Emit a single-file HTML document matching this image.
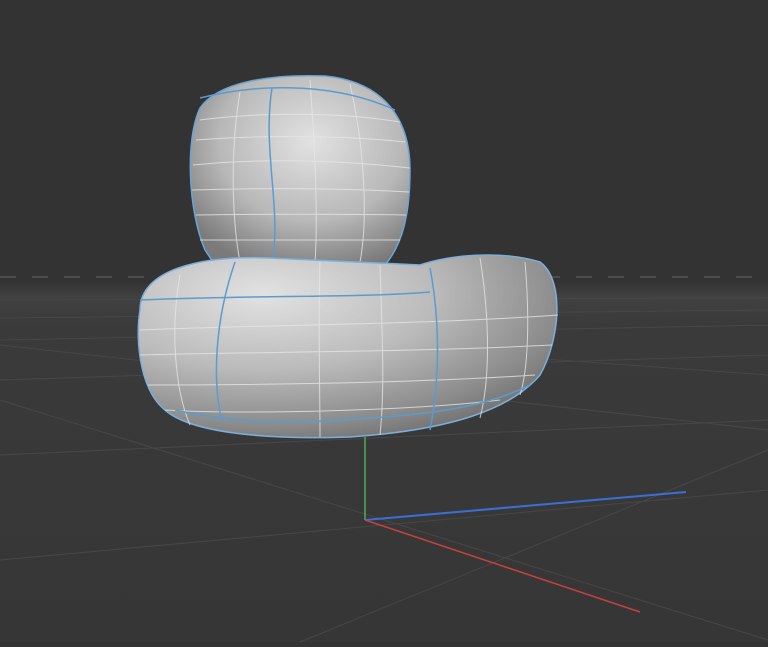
<!DOCTYPE html>
<html><head><style>html,body{margin:0;padding:0;background:#333;overflow:hidden}</style></head>
<body>
<svg width="768" height="642" viewBox="0 0 768 642" xmlns="http://www.w3.org/2000/svg">
<defs>
<linearGradient id="fl" x1="0" y1="0" x2="0" y2="1">
<stop offset="0" stop-color="#333"/><stop offset="0.04" stop-color="#414141"/><stop offset="0.12" stop-color="#3a3a3a"/><stop offset="1" stop-color="#363636"/>
</linearGradient>
<radialGradient id="hd" cx="0.55" cy="0.35" r="0.7">
<stop offset="0" stop-color="#e2e2e2"/><stop offset="0.6" stop-color="#b8b8b8"/><stop offset="1" stop-color="#7a7a7a"/>
</radialGradient>
<radialGradient id="bd" cx="0.3" cy="0.22" r="0.9">
<stop offset="0" stop-color="#e2e2e2"/><stop offset="0.45" stop-color="#bbb"/><stop offset="0.8" stop-color="#8a8a8a"/><stop offset="1" stop-color="#666"/>
</radialGradient>
</defs>
<rect width="768" height="642" fill="#333"/>
<rect y="282" width="768" height="360" fill="url(#fl)"/>
<line x1="0" y1="277" x2="768" y2="277" stroke="#555" stroke-width="1.5" stroke-dasharray="16,16"/>
<g stroke="#474747" stroke-width="1" fill="none">
<line x1="0" y1="300" x2="768" y2="298"/>
<line x1="0" y1="318" x2="768" y2="310"/>
<line x1="0" y1="340" x2="768" y2="325"/>
<line x1="0" y1="380" x2="768" y2="355"/>
<line x1="0" y1="455" x2="768" y2="420"/>
<line x1="0" y1="560" x2="768" y2="490"/>
<line x1="0" y1="400" x2="768" y2="640"/>
<line x1="0" y1="345" x2="768" y2="430"/>
<line x1="420" y1="350" x2="768" y2="375"/>
<line x1="300" y1="642" x2="768" y2="450"/>
</g>
<line x1="365" y1="437" x2="365" y2="520" stroke="#4caf50" stroke-width="1.5"/>
<line x1="365" y1="520" x2="686" y2="492" stroke="#3a6fd8" stroke-width="2"/>
<line x1="365" y1="520" x2="640" y2="612" stroke="#c84040" stroke-width="1.5"/>
<path d="M205 250 C188 210 185 140 200 108 C218 82 270 74 325 76 C385 82 410 120 410 170 C410 215 402 245 385 265 L215 265 Z" fill="url(#hd)" stroke="#6aa6d6" stroke-width="1.5"/>
<g stroke="#e6e6e6" stroke-width="1" fill="none" opacity="0.8">
<path d="M193 165 C260 158 340 160 410 168"/><path d="M192 190 C260 188 340 188 409 192"/><path d="M196 215 C260 214 340 214 406 215"/><path d="M200 240 C260 240 340 240 400 240"/>
<path d="M200 120 C260 112 340 112 400 122"/><path d="M196 140 C260 135 340 135 405 142"/>
<path d="M240 92 C230 150 232 220 240 262"/><path d="M310 80 C315 150 318 220 315 262"/><path d="M350 84 C365 150 368 220 360 262"/>
</g>
<path d="M272 88 C262 150 282 210 272 262" stroke="#5a9bd0" stroke-width="1.5" fill="none"/>
<path d="M200 98 C250 85 330 80 395 110" stroke="#5a9bd0" stroke-width="1.5" fill="none"/>
<path d="M140 310 C140 270 200 255 270 258 L420 265 C450 255 500 250 540 262 C565 280 560 340 540 375 C510 410 450 430 350 437 C260 440 190 432 165 410 C140 390 135 340 140 310 Z" fill="url(#bd)" stroke="#7ab0dc" stroke-width="1.5"/>
<g stroke="#e6e6e6" stroke-width="1" fill="none" opacity="0.8">
<path d="M140 330 C250 325 420 325 558 315"/><path d="M140 355 C250 352 420 352 552 345"/><path d="M148 385 C250 385 420 383 535 375"/><path d="M165 410 C250 415 420 410 500 400"/>
<path d="M180 275 C170 330 175 390 190 425"/><path d="M320 262 C318 330 320 390 320 437"/><path d="M380 265 C382 330 385 390 380 435"/><path d="M480 258 C490 320 490 380 480 418"/><path d="M525 262 C530 320 528 370 520 395"/>
</g>
<path d="M235 262 C215 320 212 380 222 422" stroke="#5a9bd0" stroke-width="1.5" fill="none"/>
<path d="M140 300 C250 295 360 298 430 292" stroke="#5a9bd0" stroke-width="1.5" fill="none"/>
<path d="M430 268 C440 320 440 380 430 430" stroke="#5a9bd0" stroke-width="1.5" fill="none"/>
<path d="M175 410 C220 420 280 425 340 420 C420 415 480 410 530 385" stroke="#5a9bd0" stroke-width="1.5" fill="none"/>
</svg>
</body></html>
